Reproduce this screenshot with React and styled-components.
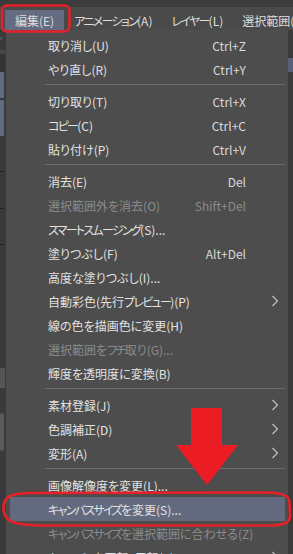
import React from "react";
import styled, { createGlobalStyle } from "styled-components";

const Global = createGlobalStyle`
  html, body { margin: 0; padding: 0; background: #3b3b3b; }
  * { box-sizing: border-box; }
`;

const FONT = `"Noto Sans CJK JP", "Noto Sans", sans-serif`;

const Page = styled.div`
  position: relative;
  width: 293px;
  height: 554px;
  overflow: hidden;
  background: #3b3b3b;
  font-family: ${FONT};
  font-feature-settings: "palt";
  -webkit-font-smoothing: antialiased;
`;

const TopStrip = styled.div`
  height: 7px;
  background: #3c3c3c;
`;

const MenuBar = styled.div`
  height: 23px;
  display: flex;
  align-items: flex-end;
  padding-left: 5px;
  background: #4a4a4a;
`;

const BarItem = styled.div`
  height: 20px;
  display: flex;
  align-items: center;
  padding: 0 ${(p) => (p.$active ? 10 : 9)}px;
  margin-right: 1px;
  font-size: 12px;
  color: #dedede;
  white-space: nowrap;
  background: ${(p) => (p.$active ? "#656b80" : "transparent")};
`;

const Kana = styled.span`
  letter-spacing: -1.7px;
`;

const Body = styled.div`
  display: flex;
  height: 524px;
`;

const LeftStrip = styled.div`
  width: 6px;
  flex: none;
  display: flex;
  flex-direction: column;
  background: #3a3a3a;
`;

const StripChevron = styled.div`
  height: 20px;
  padding-top: 4px;
  font-size: 8px;
  line-height: 8px;
  color: #8a8a8a;
`;

const StripBand = styled.div`
  height: ${(p) => p.$h}px;
  margin-top: ${(p) => p.$mt || 0}px;
  width: ${(p) => p.$w || 5}px;
  background: ${(p) => p.$c};
  border-radius: ${(p) => p.$r || 0}px;
`;

const Dropdown = styled.div`
  width: 282px;
  flex: none;
  padding: 3px 3px 0 4px;
  background: #4d4d4d;
`;

const RightStrip = styled.div`
  flex: 1;
  display: flex;
  flex-direction: column;
  background: #3a3a3a;
`;

const Item = styled.div`
  height: 24px;
  display: grid;
  grid-template-columns: minmax(0, 1fr) auto 39px;
  align-items: center;
  padding-left: 38px;
  font-size: 12px;
  white-space: nowrap;
  color: ${(p) => (p.$disabled ? "#8c8c8c" : "#e2e2e2")};
  background: ${(p) => (p.$selected ? "#646a7e" : "transparent")};
`;

const Label = styled.span`
  overflow: visible;
`;

const Shortcut = styled.span`
  justify-self: end;
  font-size: 12px;
  color: ${(p) => (p.$disabled ? "#8c8c8c" : "#dadada")};
`;

const Chevron = styled.svg`
  justify-self: start;
  margin-left: 25px;
  width: 8px;
  height: 12px;
`;

const Separator = styled.div`
  height: 1px;
  margin: 3px 0 4px 35px;
  background: #6a6a6a;
`;

const Overlay = styled.svg`
  position: absolute;
  left: 0;
  top: 0;
  width: 293px;
  height: 554px;
  pointer-events: none;
`;

const items = [
  { label: "取り消し(U)", sc: "Ctrl+Z" },
  { label: "やり直し(R)", sc: "Ctrl+Y" },
  { sep: true },
  { label: "切り取り(T)", sc: "Ctrl+X" },
  { label: "コピー(C)", sc: "Ctrl+C" },
  { label: "貼り付け(P)", sc: "Ctrl+V" },
  { sep: true },
  { label: "消去(E)", sc: "Del" },
  { label: "選択範囲外を消去(O)", sc: "Shift+Del", disabled: true },
  { label: "スマートスムージング(S)..." },
  { label: "塗りつぶし(F)", sc: "Alt+Del" },
  { label: "高度な塗りつぶし(I)..." },
  { label: "自動彩色(先行プレビュー)(P)", sub: true },
  { label: "線の色を描画色に変更(H)" },
  { label: "選択範囲をフチ取り(G)...", disabled: true },
  { label: "輝度を透明度に変換(B)" },
  { sep: true },
  { label: "素材登録(J)", sub: true },
  { label: "色調補正(D)", sub: true },
  { label: "変形(A)", sub: true },
  { sep: true },
  { label: "画像解像度を変更(L)..." },
  { label: "キャンバスサイズを変更(S)...", selected: true },
  { label: "キャンバスサイズを選択範囲に合わせる(Z)", disabled: true },
  { label: "キャンバスを回転・反転(R)", sub: true },
];

// Tighten katakana runs (the reference UI font has narrow katakana)
const Text = ({ children }) => {
  const parts = children.split(/([\u30A1-\u30FA\u30FC]+)/);
  return (
    <>
      {parts.map((p, i) =>
        /^[\u30A1-\u30FA\u30FC]+$/.test(p) ? <Kana key={i}>{p}</Kana> : <React.Fragment key={i}>{p}</React.Fragment>
      )}
    </>
  );
};

const SubArrow = () => (
  <Chevron viewBox="0 0 8 12">
    <path d="M1.5 1 L6.5 6 L1.5 11" fill="none" stroke="#c4c4c4" strokeWidth="1.1" />
  </Chevron>
);

export default function App() {
  return (
    <Page>
      <Global />
      <TopStrip />
      <MenuBar>
        <BarItem $active>編集(E)</BarItem>
        <BarItem><Text>アニメーション(A)</Text></BarItem>
        <BarItem><Text>レイヤー(L)</Text></BarItem>
        <BarItem>選択範囲(C)</BarItem>
      </MenuBar>
      <Body>
        <LeftStrip>
          <StripChevron>‹</StripChevron>
          <StripBand $h={4} $c="#474747" />
          <StripBand $h={18} $c="#333333" />
          <StripBand $h={26} $w={4} $c="#626a84" $r={1} />
          <StripBand $h={36} $w={4} $mt={2} $c="#626a84" $r={1} />
          <StripBand $h={1} $w={4} $mt={35} $c="#222222" />
          <StripBand $h={1} $w={4} $mt={36} $c="#222222" />
          <StripBand $h={1} $w={4} $mt={35} $c="#222222" />
          <StripBand $h={20} $mt={123} $c="#555555" />
          <StripBand $h={38} $w={4} $mt={25} $c="#5a5a5a" $r={2} />
        </LeftStrip>
        <Dropdown>
          {items.map((it, i) =>
            it.sep ? (
              <Separator key={i} />
            ) : (
              <Item key={i} $disabled={it.disabled} $selected={it.selected}>
                <Label><Text>{it.label}</Text></Label>
                {it.sc ? <Shortcut $disabled={it.disabled}>{it.sc}</Shortcut> : <span />}
                {it.sub ? <SubArrow /> : <span />}
              </Item>
            )
          )}
        </Dropdown>
        <RightStrip>
          <StripBand $h={14} $mt={28} $w={6} $c="#5a6078" />
        </RightStrip>
      </Body>
      <Overlay viewBox="0 0 293 554">
        <rect x="2" y="5.5" width="67.5" height="26" rx="5" fill="none" stroke="#e8202a" strokeWidth="2.5" />
        <path
          d="M32 493 C12 493 3.5 496 3.5 508 C3.5 521 12 525 40 525.5 L268 525.5 C284 525.5 290 523 290 515 L289.5 502 C289 495 282 492.5 262 492.5 Z"
          fill="none"
          stroke="#e8202a"
          strokeWidth="2.6"
        />
        <polygon points="191,408 222,408 222,445 238,445 207,485 176,445 191,445" fill="#ec1c24" />
      </Overlay>
    </Page>
  );
}
